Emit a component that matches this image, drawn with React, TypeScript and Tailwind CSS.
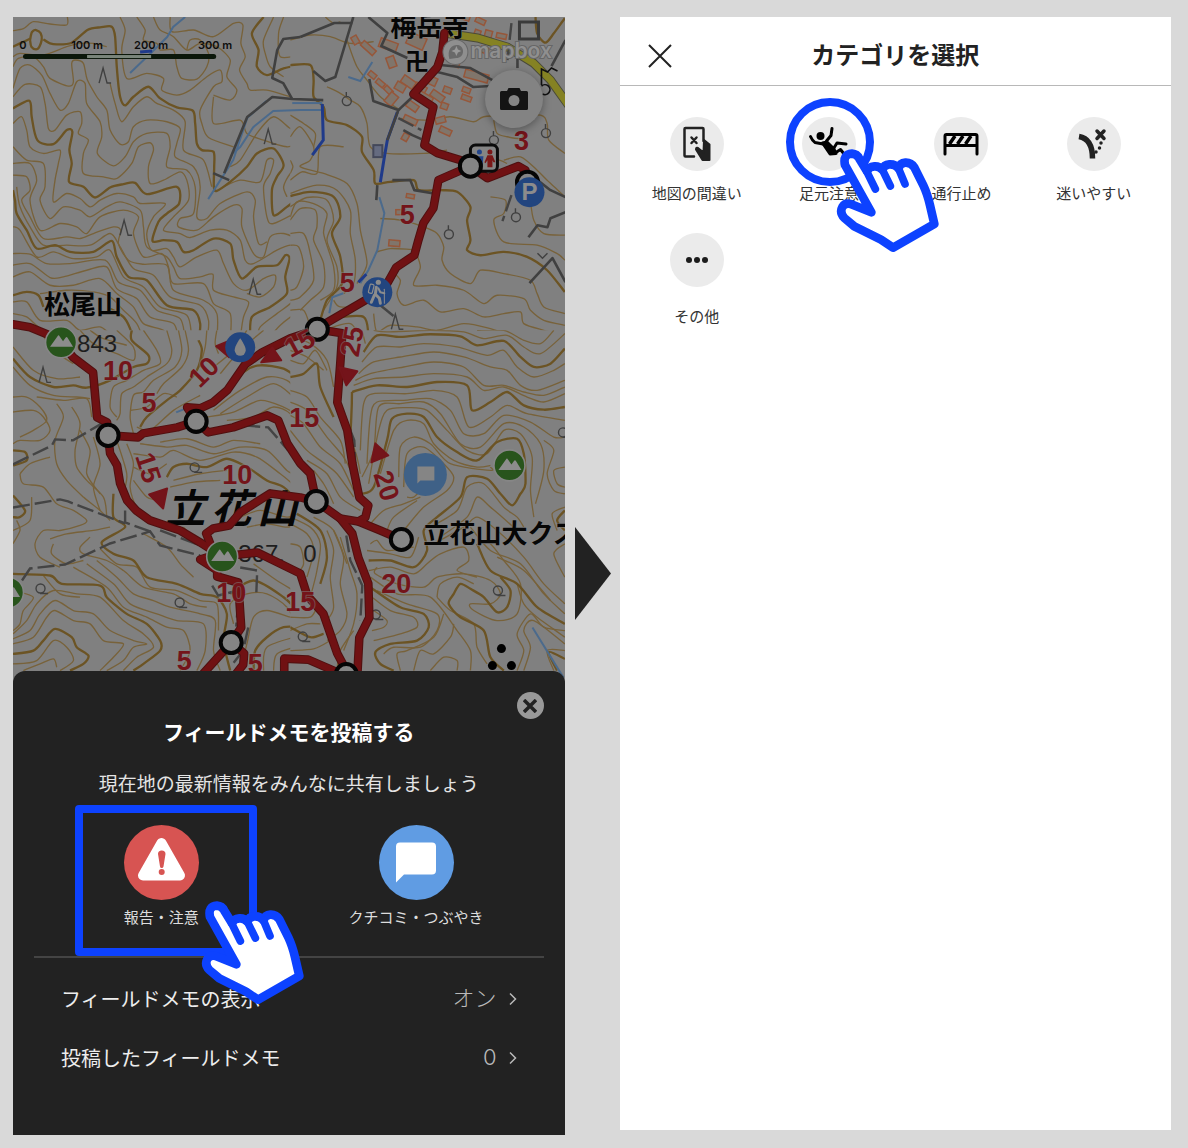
import type { ReactNode } from 'react';

/* ---------- terrain map data ---------- */

type Tile = { id: string; x: number; y: number; w: number; h: number; thick: string[]; thin: string[] };

/* Contour lines. Each tile stores its points at three units per map pixel. */
const tiles: Tile[] = [
  {
    id: 'nw', x: 0, y: 0, w: 290, h: 330,
    thick: [
      '130,118 150,130 170,133 215,128 262,90 300,82 335,80 345,110 350,200 360,290 375,316 400,290 445,260 480,295 530,322 578,332 585,370 590,430 605,450 640,455 642,500 641,560 650,572 690,545 740,500 770,460 820,445 850,495 830,530 815,570 820,645 860,620 900,588',
      '39,325 88,302 95,350 112,420 160,432 200,390 217,395 208,450 215,490 207,545 250,560 285,592 330,562 370,552 405,548 440,582 530,560 537,610 500,640 475,665 457,722 490,720 530,725 550,755 580,750 640,715 690,730 700,780 725,835 770,800 830,795 855,765 868,775 855,830 860,880 810,920 755,950 750,1020',
      '39,570 45,600 50,640 80,690 110,745 165,735 210,755 280,755 335,722 350,770 385,830 440,840 500,915 580,930 600,970 595,1020',
      '39,885 80,875 115,885 130,920',
      '330,925 370,950 390,985 395,1020',
      '790,51 755,100 775,150 770,200 800,225 850,205 900,195',
      '90,120 96,96 108,90 122,100 125,120 118,140 108,148 94,140 90,120',
      '39,140 60,130 90,116',
    ],
    thin: [
      '39,92 70,86 100,65 150,72 200,75 202,51',
      '39,170 60,160 130,165 200,140 240,130 280,130 320,140',
      '39,200 55,175 100,170 130,200 150,235 205,258 220,245 215,190 225,180 250,190 262,240 290,290 320,330 330,390 360,432 385,425 400,380 440,360 500,365 540,385 530,430 525,470 580,500 600,560 590,650 620,655 660,610 740,575 765,600 760,650 775,730 800,725',
      '39,265 60,205 90,195 125,225 150,280 180,330 205,310 230,245 255,250 260,310 300,365 305,410 292,460 340,497 375,470 400,425 440,400 500,400 510,440 500,500 560,510 585,560 580,640 540,655 535,680 590,690 640,650 700,615 725,625 725,680 760,760 790,770 810,710 850,700 900,720',
      '39,290 75,253 120,260 135,310 145,385 165,390 200,345 240,335 245,370 235,400 265,420 250,460 250,520 310,530 350,535 395,490 415,440 450,428 460,450 445,500 450,550 490,540 540,515 560,540 565,600 520,650 490,690 540,700 570,712 630,690 680,690 720,720 735,780 760,790 830,750 870,735 900,745',
      '330,250 345,310 365,365 400,320 440,290 470,310 520,330 555,365 550,450 610,480 635,560',
      '39,370 65,350 80,390 90,440 130,460 180,450 175,490 165,540 160,605 200,580 240,595 270,620 300,600 350,580 400,590 420,610 495,610 460,650 440,700 455,750 500,745 520,770 540,800 590,770 650,750 670,790 700,850 740,870 790,835 825,825 820,860 780,890 740,880',
      '39,440 80,480 130,490 135,560 120,600 150,655 190,620 240,630 270,650 320,620 360,605 420,630 430,680 440,740 500,770 520,800 540,835 600,830 638,822 640,870 700,890 745,905 730,950 720,1020',
      '39,490 90,490 110,540 90,600 120,690 180,670 230,680 260,700 300,650 370,630 415,650 400,700 430,770 485,760 505,800 520,850 610,850 640,910 690,940 690,1020',
      '39,525 80,530 90,570 65,600 90,650 130,715 200,710 240,715 280,700 340,680 362,690 355,730 385,780 430,792 500,795 520,870 610,900 650,940 650,1020',
      '50,560 60,620 90,680 130,735 200,735 270,735 330,700 360,740 400,805 460,825 510,890 600,915 625,960 620,1020',
      '39,680 60,690 110,770 160,755 220,775 290,770 330,750 370,830 430,860 480,920 560,945 575,1020',
      '39,760 90,762 140,790 210,790 315,780 355,845 420,870 470,930 540,955 555,1020',
      '39,795 90,790 150,832 190,830 260,810 320,800 350,865 410,895 450,950 520,970 535,1020',
      '39,830 90,815 150,855 220,855 300,835 350,880 400,920 430,970 490,990 500,1020',
      '120,880 200,870 280,875 330,890 370,930 410,970 430,1020',
      '39,905 80,905 120,960 200,960 240,990 300,980 350,1020',
      '39,940 80,950 130,990 200,1000 230,1020',
      '360,51 375,90 365,150 380,235 440,220 490,235 485,270 530,285 570,270 620,230 660,210 665,245 640,260 600,330 605,370 625,412 700,440',
      '410,51 435,90 430,120 470,130 480,150 520,150 530,200 545,235 590,237 620,200 625,160 600,120 570,120 560,150',
      '510,51 515,95 580,90 640,110 700,70 728,75 722,130 735,170 718,210 740,250 750,270 800,270 870,290 900,300',
      '640,290 640,370 720,360 740,400 790,420 860,440 900,425',
      '460,51 480,90 520,110 560,150 600,130 650,140 690,180 680,230 710,270 690,300 640,285',
      '690,500 720,480 770,400 820,350 870,385 900,390',
      '670,560 720,540 780,545 800,480 820,480 810,520 790,560 800,650 820,670 900,630',
      '850,51 835,100 840,170 900,165',
      '820,51 790,120 795,160 810,200 850,230',
      '890,455 900,500', '860,590 850,560 870,520 900,500',
      '770,1020 780,980 830,940 880,900 900,840', '800,1020 840,975 900,930', '900,760 880,830 885,900',
    ],
  },
  {
    id: 'ne', x: 290, y: 0, w: 275, h: 330,
    thick: [
      '0,195 60,195 70,240 70,290 100,320 110,360 170,375 215,410 215,455 250,510 255,550 300,545 370,540 385,570 450,570 500,575 540,620 530,660 540,720 530,750 570,765 640,755 710,770 770,810 823,875',
      '0,588 60,575 130,590 150,650 125,700 150,770 155,850 110,900 90,960',
      '735,51 740,100 765,128 790,100 823,55',
      '120,955 220,950 235,1020',
      '350,1020 400,1000 490,1010 550,1020',
    ],
    thin: [
      '0,120 60,105 120,110 180,130 250,125', '105,51 130,70 150,65',
      '170,120 200,200 230,240 270,290 330,330',
      '110,260 150,280 180,300 210,320 230,370 240,440 290,460 400,460 470,450',
      '330,355 420,360 480,350 550,365 580,350 660,345 750,345 770,370 775,420 823,460',
      '0,410 30,380 70,440 60,480 30,500 100,520 170,550 200,610 210,690 230,790 200,850',
      '0,345 40,370 75,400 70,440', '0,480 8,500 0,520', '0,540 35,515 80,520 90,440 160,440',
      '0,580 80,555 140,570 180,630 180,700 195,780 190,850 160,880',
      '0,650 20,605 70,610 110,640 100,700 130,800 130,870 90,900',
      '0,660 30,625 75,630 80,680 70,720 100,790 100,860 60,900 30,930',
      '0,700 40,700 60,760 70,840 30,890 0,900', '0,735 25,740 40,800 20,860 0,870',
      '0,930 40,930 60,980', '0,620 50,592 110,600 130,660 110,720 140,800 140,860 100,930',
      '270,655 330,660 400,680 440,700 460,740 455,780 480,820 540,850 570,810 640,820 720,840 740,880 760,920 823,940',
      '370,740 390,800 370,855 440,855 520,870 580,910 620,885 700,895 720,930 760,960 823,975',
      '300,810 330,840 320,880 340,915 400,900 450,935 520,925 580,950 640,940 690,935 700,970 760,990 823,1005',
      '250,940 260,995 300,975 380,980 440,990 520,970 600,985 680,1010 740,1005',
      '610,360 620,400 650,410 690,415 700,400', '600,590 645,600 640,640 610,660 640,725 740,735 800,760 823,780',
      '600,515 620,480 650,490', '720,600 730,660 760,700 823,705', '640,480 690,470 740,510 770,540 823,590',
      '260,755 300,745 370,748', '130,900 150,920 220,915', '100,990 180,970 210,1020',
    ],
  },
  {
    id: 'sw', x: 0, y: 330, w: 290, h: 345,
    thick: [
      '39,85 90,140 160,170 220,165 260,172 330,150 400,110 440,100 445,75 395,30 395,0',
      '39,730 150,735 185,760 300,765 320,800 380,850 440,880 480,930 480,960 430,1000 400,1020',
      '39,970 100,960 130,930 165,895 215,920 230,950 265,975 250,1000 210,1020',
      '900,150 850,115 780,105 730,125 680,190 640,215', '420,290 440,260 500,210 540,180 590,120 605,60 595,30',
      '340,490 340,560 375,590 305,635 340,670 400,690 440,740 530,760 600,790 650,800 680,850 670,930 690,1020',
      '500,440 520,410 560,400 620,410 680,385 740,410 800,450 850,470 900,520',
      '39,495 75,540 60,560 39,560', '39,360 75,365 80,390 39,405',
      '760,1020 765,960 800,920 850,890 900,890', '690,790 760,750 850,800 900,850',
    ],
    thin: [
      '39,50 100,120 170,145 240,140', '39,110 90,165 160,195 230,200 270,205',
      '120,0 160,60 220,100', '240,0 280,40 350,70 400,90 400,50 350,0', '270,0 310,25 380,45', '430,0 470,60 480,100 430,120 380,150 340,170 330,230 350,260',
      '500,0 515,60 500,100 440,140 400,170 365,190 360,250 350,270', '535,0 545,60 525,110 460,150 430,185 400,195 390,260 400,310',
      '555,0 565,60 545,110 490,160 470,190', '620,0 615,50 600,110', '650,0 645,40 655,70', '390,240 440,230 490,190 530,200',
      '39,200 80,200 120,230 140,270 100,300 60,320', '39,245 100,240 130,260 150,300 120,330 60,330 39,340',
      '110,200 190,210 260,205 275,260', '170,220 190,260 165,330 170,400 200,450 250,500 300,540 330,570',
      '215,230 240,280 225,360 230,410 260,450 310,500 320,560',
      '280,320 300,400 280,470 300,540', '240,300 270,360 260,430 300,490',
      '60,430 90,400 150,380', '60,430 70,460 130,470 170,520 220,540 260,570 240,585 180,600 130,600 105,640 120,680 180,710',
      '150,625 200,610 280,600 330,590', '160,640 155,670 200,700 250,690', '270,620 240,650 250,670 320,690 370,720 430,770 520,790 570,820 620,830',
      '300,655 350,700 410,710 450,770 530,780 600,810 650,820 655,900', '290,690 350,740 400,790 460,810 510,830 600,850 645,870 640,960 660,1020',
      '260,700 340,760 390,820 470,850 530,870 610,880 615,960 590,1020', '220,710 320,770 370,830 440,860 500,890 550,900 570,960 540,1020',
      '39,780 100,800 70,840 60,880 39,900', '39,925 90,900 120,850 165,810 220,840 280,850 330,900 400,930 440,940 400,950 370,990 320,1020',
      '39,940 100,920 140,860 165,840 220,870 270,880 310,930 370,940 340,980 300,1020', '39,910 80,870 110,820 160,780 230,790 300,800 370,870 430,910 460,950 410,980 370,1020',
      '39,1000 110,990 160,930 200,950 220,990 180,1020', '70,1020 120,1000 160,985 170,1010', '130,735 180,790 240,800',
      '410,290 450,300 520,240 600,195', '480,335 560,325 640,350 700,330 780,340', '420,340 500,350 560,345 640,370 720,350 800,360 860,420 900,440',
      '400,370 480,380 520,360 600,390 700,365 770,380 840,430 900,480', '400,410 450,430 500,400', '400,450 440,500 480,510',
      '520,450 600,430 680,420', '510,470 580,455 660,450', '380,340 400,400 390,470 410,530 450,560',
      '350,330 380,430 370,490', '640,240 720,180 800,140 860,150 900,190', '660,250 740,200 820,160 880,200 900,220', '620,260 700,245 780,210 850,230 900,260',
      '680,270 760,260 820,230 870,250 900,300', '660,130 720,60 790,0', '640,110 700,60 740,0',
      '760,700 830,750 880,780 900,790', '700,880 690,820 740,790 800,790 860,830 900,900', '720,1020 740,940 760,860 800,840 870,860 900,870',
      '790,1020 800,950 900,915', '820,1020 830,970 900,945', '720,560 780,540 860,560 900,545', '740,590 800,580 860,590 900,580',
      '39,640 60,600 50,570', '39,600 90,570 95,500', '550,590 580,620', '430,610 500,650 540,700 580,740',
    ],
  },
  {
    id: 'se', x: 290, y: 330, w: 275, h: 345,
    thick: [
      '220,65 260,15 330,20 420,12 510,18 560,45 640,32 690,80 730,110 780,100 823,55',
      '185,185 260,165 350,170 440,155 530,165 545,240 600,215 650,185 700,225 760,238 823,230',
      '0,140 40,130 80,100 90,170 130,260', '185,185 183,260 180,330',
      '215,490 250,470 290,330 305,265 350,250 400,260 440,320 500,365 560,390 620,335 680,325 700,370 705,460 690,490 665,525 630,490 590,445 530,440 510,500 440,560 400,600 410,660 370,710 300,690 235,690',
      '560,640 600,720 680,760 740,830 823,880',
      '240,770 330,830 400,850 415,890 380,930 300,940 255,965 270,1000 310,1020',
      '640,1020 600,980 580,900 510,860 475,820 490,790 510,760 540,775 580,800 620,845 650,830 660,780 630,740',
      '800,1020 775,965 823,985', '823,540 800,570 823,600', '20,550 90,600 110,680 90,760', '0,890 60,920 100,910',
    ],
    thin: [
      '215,0 225,40', '250,0 290,5 420,0 520,5 580,25 650,15 700,50 750,70 823,10', '560,0 640,0 700,30 750,40 790,0',
      '215,95 260,50 330,50 400,40 500,50 590,75 640,60 680,110 730,140 790,120 823,100',
      '205,130 250,95 330,80 430,65 520,80 600,110 650,120 690,165 740,180 823,150',
      '195,150 240,130 340,110 430,95 520,110 580,165 640,165 700,185 760,195 823,170',
      '190,165 250,145 340,140 430,130 530,140 580,180 640,170 710,200 760,215 823,190',
      '210,360 220,220 250,190 350,190 430,180 500,200 535,290 600,260 650,225 710,250 823,270',
      '230,400 240,260 260,215 340,210 420,205 480,240 520,310 580,310 640,255 720,275 790,320 823,320',
      '215,440 250,360 265,230 330,220 400,215 450,250 510,340 570,350 640,280 700,290 750,340 760,420 735,520',
      '235,460 265,300 290,240 350,232 410,240 470,300 530,360 590,370 640,300 690,310 725,380 720,480 730,560',
      '270,430 310,300 350,270 400,280 430,340 490,390 560,410 600,405', '325,440 330,350 370,320 420,340 480,400 600,420 600,410',
      '340,470 350,370 400,350 460,400 490,440 470,480 400,530 340,600', '350,500 370,500 400,470', '380,510 310,560 290,600',
      '240,580 280,540 340,520 390,500', '420,590 500,540 530,470 580,460 640,530 680,560 700,590', '450,620 530,560 560,500 600,530 680,600',
      '430,640 520,590 560,560 620,600 700,680 760,760 823,820', '540,590 600,660 690,700 760,790 823,850', '620,680 700,720 780,810',
      '823,530 785,550 800,600', '823,410 790,420 800,460 823,470', '760,330 790,360 770,430 790,480 823,490',
      '235,720 300,710 370,730 410,700 450,670 520,650 535,690 500,720 560,740', '260,710 255,730 320,760 400,770 440,740 520,730 600,750 630,790 600,820 540,820 550,840 620,870 680,850 690,760 640,690 600,640 570,630',
      '240,640 260,630 290,660 370,650', '230,660 300,670 360,680 385,620', '240,740 320,790 420,800 500,900 540,960 540,1020',
      '245,800 300,840 370,860 380,890 330,910 250,930', '250,840 290,870 280,890 245,900', '260,780 350,820 440,850 440,900 390,950 310,950 280,970',
      '440,800 450,760 500,740 550,760', '440,800 480,840 550,880 560,950 590,1000', '460,850 430,920 350,960 320,970 330,1020', '490,880 480,920 430,970 390,960 370,1020', '420,1020 460,980 500,990 500,1020',
      '680,1020 700,960 680,910 720,850 760,890 823,900', '700,1020 720,950 700,900 730,870 823,940', '680,760 700,820 740,860 823,920', '790,1020 770,960 823,960',
      '0,20 60,40 110,90 130,170', '0,60 50,80 100,120', '0,90 40,100 75,60 110,120', '0,180 50,200 90,260 150,330 165,400', '0,215 50,240 110,320 160,380 190,440', '0,255 40,280 90,350 150,400 190,480',
      '0,300 50,360 90,390 140,430 190,500', '50,390 110,430 150,500 210,540', '70,420 100,460 130,520', '180,320 200,380 210,430',
      '0,560 60,590 90,640 80,720 60,800', '0,580 50,610 70,660 50,740', '110,600 130,660 120,740 130,830 110,870', '130,600 160,680 150,760 170,850 150,900 110,930', '150,620 180,720 200,790 190,880 160,960',
      '0,640 30,650 40,700 20,730', '70,560 130,600 170,700', '0,960 70,955 120,930', '0,900 50,880 90,880', '0,860 60,860 80,830', '823,640 790,670 823,740', '140,1020 150,960 190,900',
    ],
  },
];

/* Catmull-Rom smoothing of a "x,y x,y" list */
function smooth(points: string): string {
  const p = points.split(' ').map((s) => s.split(',').map(Number));
  const r = (n: number) => Math.round(n);
  let d = `M${p[0][0]} ${p[0][1]}`;
  for (let i = 0; i < p.length - 1; i++) {
    const a = p[Math.max(i - 1, 0)];
    const b = p[i];
    const c = p[i + 1];
    const e = p[Math.min(i + 2, p.length - 1)];
    const k = 7;
    d += `C${r(b[0] + (c[0] - a[0]) / k)} ${r(b[1] + (c[1] - a[1]) / k)} ${r(c[0] - (e[0] - b[0]) / k)} ${r(c[1] - (e[1] - b[1]) / k)} ${c[0]} ${c[1]}`;
  }
  return d;
}

const routes = [
  '444,33 442,52 437,67 413,94 433,107 424,145 437,153 470,163',
  '470,166 487,178 518,166 525,170 527,182',
  '470,166 438,180 433,208 423,223 418,240 414,255 396,267 387,283 377,293 317,328',
  '317,329 290,338 262,352 245,364 227,390 213,402 200,408 187,407 196,421',
  '317,329 342,333 340,363 337,402 347,430 352,463 359,497 368,505 365,517 358,521',
  '316,501 340,518 358,521 380,530 401,539',
  '340,518 352,533 358,557 368,583 369,617 359,637 357,675',
  '108,435 138,437 143,433 177,427 196,421 208,432 233,427 267,415 278,420 287,443 300,463 310,473 316,501',
  '13,324 30,327 47,334 61,342 73,357 93,372 97,417 107,422 108,435',
  '108,435 110,453 117,465 120,483 127,500 136,510 150,520 180,530 200,542 222,556',
  '212,548 206,533 213,528 229,525 240,512 270,493 300,497 316,501',
  '222,556 257,552 300,573 307,595 323,613 337,653 346,670',
  '222,552 200,559 217,570 217,576 238,582 241,627 231,642',
  '231,642 203,673', '231,642 244,653 243,664 236,673',
  '284,675 284,658 308,659 338,672',
];

const greyRoads = [
  '300,37 334,23 352,23', '353,17 335,77 325,81 313,71', '369,79 373,101 398,110 387,140', '368,17 387,33 381,46 407,58',
  '398,110 412,97', '392,180 410,180 414,190 432,193', '377,185 376,200', '537,180 550,190 565,197', '565,212 550,218 547,227 537,225 528,237',
  '565,282 552,258 529,283', '437,72 457,77 473,87 490,86', '440,65 470,68 492,80', '300,37 283,39 277,50 272,78 283,83 292,99',
  '323,100 292,99 272,97 247,117 224,173', '551,66 565,40', '517,68 517,45', '403,130 412,135 421,139', '213,173 229,180',
];
const greyDashes = [
  '13,464 52,445 55,439 73,440 102,423', '13,507 60,499 68,501 125,523', '22,580 30,568 65,564 110,543 150,531 160,545 200,555',
  '125,510 125,522 150,531', '160,530 200,545', '511,23 507,60', '511,195 502,221', '398,118 421,130', '243,425 268,427 288,450',
  '342,410 354,440 356,490', '346,535 350,560 362,585 360,620', '238,600 236,626', '248,627 243,650 232,664', '240,567 257,570 256,595',
  '380,305 396,318', '212,585 218,595 238,590',
];
const brooks = ['185,17 173,27 167,37 157,47 130,73', '266,101 247,118 233,160 208,199', '322,110 300,110 273,111 253,127 240,147 233,153', '372,62 360,81 348,77', '379,197 384,213 377,250 368,270 360,283', '343,293 332,297 329,313', '532,627 563,677', '176,412 186,408', '292,103 322,103'];
const deepBrooks = ['322,104 323,140 312,155', '397,112 387,140 384,157 380,182', '358,282 366,274', '140,52 152,51'];

const houses: [number, number, number, number, number][] = [
  [355, 40, 6, 8, -30], [368, 48, 16, 6, 42], [388, 45, 18, 9, 20], [416, 41, 18, 12, 24], [391, 62, 8, 11, -20], [408, 82, 14, 8, 35],
  [372, 75, 8, 5, 40], [380, 83, 9, 5, 40], [388, 90, 9, 5, 45], [391, 99, 9, 12, 40], [400, 87, 10, 8, 30], [412, 106, 12, 7, 35],
  [420, 88, 12, 7, 30], [430, 80, 13, 8, 25], [424, 97, 17, 7, 30], [437, 96, 14, 7, 35], [444, 106, 7, 6, 20], [440, 120, 10, 6, -15],
  [445, 131, 12, 6, 25], [405, 137, 6, 7, 30], [410, 120, 14, 6, 25], [447, 90, 8, 6, 20], [476, 76, 24, 8, 15], [466, 90, 8, 5, 20],
  [466, 98, 10, 5, 20], [477, 33, 6, 6, 20], [488, 34, 7, 7, 15], [501, 36, 10, 5, 12], [480, 21, 10, 5, 25], [465, 17, 9, 6, 20],
  [394, 243, 11, 6, 5], [410, 196, 8, 4, 10], [400, 212, 9, 5, 0], [484, 50, 8, 6, 20], [456, 64, 6, 6, 20], [400, 17, 10, 5, 10],
];

const knots: [number, number][] = [[470, 166], [317, 329], [196, 421], [108, 435], [316, 501], [401, 539], [231, 642], [346, 674]];

const minutes: [string, number, number, number][] = [
  ['3', 521, 140, 0], ['5', 407, 214, 0], ['5', 347, 282, 0], ['15', 299, 342, -28], ['25', 351, 341, -80], ['10', 118, 370, 0],
  ['5', 149, 402, 0], ['10', 203, 371, -45], ['15', 304, 417, 0], ['10', 237, 474, 0], ['15', 149, 467, 72], ['20', 387, 485, 72],
  ['20', 396, 582, 0], ['10', 231, 591, 0], ['15', 300, 600, 0], ['5', 184, 659, 0], ['5', 255, 662, 0],
];

const arrowHeads = ['216,346 233,339 229,357', '261,362 272,347 281,360', '339,367 357,371 346,385', '149,494 167,488 163,508', '375,443 388,455 371,462'];
const conifers: [number, number][] = [[104, 76], [269, 137], [125, 228], [254, 287], [44, 375], [396, 322]];
const broadleafs: [number, number][] = [[346, 101], [545, 133], [448, 234], [515, 217], [493, 140]];
const shrubs: [number, number][] = [[194, 467], [40, 588], [179, 602], [497, 590], [375, 614], [302, 636], [562, 432]];
const peaks: [number, number][] = [[61, 342], [222, 556], [509, 465], [8, 592]];

const cjk = "'Noto Sans CJK JP'";

function TerrainMap() {
  return (
    <svg viewBox="13 17 551 666" preserveAspectRatio="xMidYMin slice" className="block h-[666px] w-full bg-[#808080]" role="img" aria-label="地図">
      <rect x="0" y="0" width="600" height="700" fill="#808080" />
      {tiles.map((t) => (
        <svg key={t.id} x={t.x} y={t.y} width={t.w} height={t.h} viewBox={`0 0 ${t.w * 3} ${t.h * 3}`} fill="none" stroke="#78623a">
          {t.thin.map((l) => <path key={l} d={smooth(l)} strokeWidth="4" />)}
          {t.thick.map((l) => <path key={l} d={smooth(l)} strokeWidth="7" stroke="#6c5424" />)}
        </svg>
      ))}
      <g fill="none" stroke="#4b6a8c" strokeWidth="2">{brooks.map((l) => <polyline key={l} points={l} />)}</g>
      <g fill="none" stroke="#1f3a8a" strokeWidth="3">{deepBrooks.map((l) => <polyline key={l} points={l} />)}</g>
      <g fill="#80756b" stroke="#96573a" strokeWidth="1.5">
        {houses.map(([x, y, w, h, a]) => <rect key={`${x}-${y}`} x={x - w / 2} y={y - h / 2} width={w} height={h} transform={`rotate(${a} ${x} ${y})`} />)}
      </g>
      <path d="M444 33L477 38L507 47L533 63L550 80L570 108" fill="none" stroke="#4a4a3a" strokeWidth="9" />
      <path d="M444 33L477 38L507 47L533 63L550 80L570 108" fill="none" stroke="#858223" strokeWidth="7" />
      <g fill="none" stroke="#404040" strokeWidth="2.6" strokeLinejoin="round">{greyRoads.map((l) => <polyline key={l} points={l} />)}</g>
      <g fill="none" stroke="#444" strokeWidth="2.4" strokeDasharray="17 5">{greyDashes.map((l) => <polyline key={l} points={l} />)}</g>
      <rect x="373" y="145" width="9" height="12" fill="#656b80" stroke="#44485a" strokeWidth="2" />
      <g fill="none" stroke="#404040" strokeWidth="1.4">
        {conifers.map(([x, y]) => <path key={x} d={`M${x - 5} ${y + 7}L${x - 1} ${y - 8}L${x + 3} ${y + 7}H${x + 7}`} />)}
        {broadleafs.map(([x, y]) => <path key={x} d={`M${x - 4} ${y}a4.5 4.5 0 1 0 9 0a4.5 4.5 0 1 0 -9 0M${x} ${y - 4}V${y - 9}`} />)}
        {shrubs.map(([x, y]) => <path key={x} d={`M${x - 4} ${y}a4.5 4.5 0 1 0 9 0a4.5 4.5 0 1 0 -9 0M${x} ${y + 5}H${x + 8}`} />)}
        <path d="M537 253L542 258L547 253" />
      </g>
      <path d="M519 22H538V39H519Z" fill="none" stroke="#3a3a3a" strokeWidth="3" />
      <path d="M541 85V69L547 72L551 68L557 71M541 86a5 5 0 1 1 1 8" fill="none" stroke="#111" strokeWidth="1.6" />
      <circle cx="501" cy="648" r="4.5" /><circle cx="492" cy="665" r="4.5" /><circle cx="511" cy="665" r="4.5" />

      <g fill="#060606" fontFamily={cjk} fontWeight="700" stroke="#858585" strokeWidth="1" paintOrder="stroke">
        <text x="44" y="314" fontSize="26">松尾山</text>
        <text x="390" y="36" fontSize="26">梅岳寺</text>
        <text x="405" y="70" fontSize="24">卍</text>
        <text x="423" y="543" fontSize="26">立花山大クス</text>
        <g transform="translate(165 523) skewX(-14)" fontSize="40" strokeWidth="0">
          <text x="0" y="0">立</text><text x="46" y="0">花</text><text x="92" y="0">山</text>
        </g>
      </g>
      <g fill="#1e1e1e" fontFamily="'Liberation Sans'" fontSize="24" fontWeight="400">
        <text x="77" y="352">843</text><text x="238" y="562">367.</text><text x="303" y="562">0</text>
      </g>

      <g fill="none" strokeLinejoin="round" strokeLinecap="round">
        <g stroke="#4f1010" strokeWidth="8.6">{routes.map((l) => <polyline key={l} points={l} />)}</g>
        <g stroke="#701113" strokeWidth="6.6">{routes.map((l) => <polyline key={l} points={l} />)}</g>
      </g>
      <g fill="#74141a" stroke="#74141a" strokeWidth="2" strokeLinejoin="round">{arrowHeads.map((a) => <polygon key={a} points={a} />)}</g>

      <g>
        <circle cx="240" cy="347" r="15" fill="#22457f" />
        <path d="M240 338C236 344 234.500 347 234.500 350A5.500 5.500 0 0 0 245.500 350C245.500 347 244 344 240 338Z" fill="#858585" />
        <circle cx="377" cy="292" r="15" fill="#22457f" />
        <g stroke="#8c8c8c" fill="none" strokeLinecap="round" strokeLinejoin="round">
          <circle cx="378" cy="282" r="2.600" fill="#8c8c8c" stroke="none" />
          <path d="M376 287L375 294L379 298L380 303M374 295L371 302" strokeWidth="3" />
          <path d="M378 288L380 292L384 293" strokeWidth="2" /><path d="M384 289V303" strokeWidth="1" />
          <rect x="369" y="284" width="4" height="9" rx="1" strokeWidth="1.200" transform="rotate(14 371 288)" />
        </g>
        <circle cx="425" cy="474" r="21.500" fill="#3f6187" />
        <path d="M417 466H434V480H420L417 483Z" fill="#858585" />
        {peaks.map(([x, y]) => (
          <g key={x} transform={`translate(${x} ${y})`}>
            <circle r="15.500" fill="#28541c" stroke="#868686" strokeWidth="1.600" />
            <path d="M-11 4.500L-3.500 -6Q-2.500 -8 -1.500 -6L2 -1L4.500 -4.500Q5.500 -6 6.500 -4.500L12 4.500Z" fill="#8c8c8c" />
          </g>
        ))}
      </g>

      <rect x="470" y="145" width="27" height="26" rx="5" fill="#858585" stroke="#0b0b0b" strokeWidth="3" />
      <g fill="#23458c"><circle cx="479" cy="152" r="2.500" /><path d="M475 156H483L482 167H476Z" /></g>
      <g fill="#7a1717"><circle cx="489.500" cy="152" r="2.500" /><path d="M487 155H492L495 162H493L492 160V167H487V160L485 163L484 162Z" /></g>
      <circle cx="527" cy="182" r="10.500" fill="#858585" stroke="#050505" strokeWidth="4" />
      <circle cx="529" cy="192" r="15" fill="#22457f" />
      <text x="529" y="200" textAnchor="middle" fontFamily="'Liberation Sans'" fontWeight="700" fontSize="24" fill="#8c8c8c">P</text>
      {knots.map(([x, y]) => <circle key={x} cx={x} cy={y} r="10.500" fill="#858585" stroke="#050505" strokeWidth="4" />)}

      <g fontFamily="'Liberation Sans'" fontWeight="700" fontSize="27" fill="#74141a" stroke="#858585" strokeOpacity="0.5" strokeWidth="2" paintOrder="stroke" textAnchor="middle">
        {minutes.map(([t, x, y, a]) => <text key={`${x}-${y}`} transform={`translate(${x} ${y}) rotate(${a})`} y="10">{t}</text>)}
      </g>

      <g fill="#8f8f8f" stroke="#666" strokeWidth="1.500">
        <circle cx="455" cy="52" r="12.500" strokeWidth="1" />
        <path d="M449 59C446 48 453 44 458 45C465 47 464 58 456 58Z" fill="#696969" stroke="none" />
        <path d="M456 46L457.500 49.500L461 51L457.500 52.500L456 56L454.500 52.500L451 51L454.500 49.500Z" stroke="none" fill="#999" />
        <text x="470" y="58" fontFamily="Inter" fontSize="21" fontWeight="600" strokeWidth="2" paintOrder="stroke">mapbox</text>
      </g>

      <g fontFamily="Inter" fontSize="11" fontWeight="600" fill="#0d0d0d" textAnchor="middle">
        <text x="23" y="49">0</text><text x="87" y="49">100 m</text><text x="151" y="49">200 m</text><text x="215" y="49">300 m</text>
      </g>
      <rect x="23" y="54" width="193" height="5" rx="2.500" fill="#0b170a" />
      <rect x="87" y="55" width="64" height="3" fill="#7a857a" />
    </svg>
  );
}

/* ---------- shared pieces ---------- */

function PointingHand({ className }: { className: string }) {
  return (
    <svg viewBox="170 176 312 312" className={`pointer-events-none absolute z-10 size-[104px] ${className}`} aria-hidden="true">
      <g stroke="#0d42ff" strokeWidth="26" strokeLinejoin="round" strokeLinecap="round" fill="#fff">
        <path d="M197 224Q190 192 218 190Q233 191 240 205L263 243Q268 229 285 228Q300 227 309 238Q314 223 330 222Q348 221 357 234Q362 218 378 217Q395 216 405 231L432 285Q444 310 452 345L465 401L341 472L305 448L225 408L195 383Q180 366 189 350Q197 337 214 341L276 366Z" />
        <path d="M262 243L288 296M309 238L333 287M357 233L377 281" strokeWidth="23" />
      </g>
    </svg>
  );
}

function Chevron() {
  return (
    <svg viewBox="0 0 8 14" className="h-[14px] w-2" fill="none" stroke="#b9b9b9" strokeWidth="1.500" aria-hidden="true">
      <path d="M1 1.500L6.500 7L1 12.500" />
    </svg>
  );
}

function SettingRow({ label, value }: { label: string; value: string }) {
  return (
    <button type="button" className="flex h-[59px] w-full items-center px-12 text-left">
      <span className="flex-1 text-[20px] text-[#ededed]">{label}</span>
      <span className="mr-3 font-[Inter,'Noto_Sans_CJK_JP',sans-serif] text-[22px] font-light text-[#b9b9b9]">{value}</span>
      <Chevron />
    </button>
  );
}

/* ---------- category icons, 54 x 54 ---------- */

const mapMistake = (
  <g fill="none" stroke="#222" strokeWidth="2.500" strokeLinejoin="round" strokeLinecap="round">
    <path d="M24 39.500H15.500Q14.500 39.500 14.500 38.500V12Q14.500 11 15.500 11H32.500Q33.500 11 33.500 12V24" />
    <path d="M21.500 20.500L26.500 26M26.500 20.500L21.500 26" strokeWidth="2.500" />
    <path d="M34 23L39.500 27.500V43H32.500L26 32.500Q26 30 28 31L33.500 35.500Z" fill="#222" strokeWidth="2" />
  </g>
);
const falling = (
  <g fill="none" stroke="#000" strokeLinecap="round" strokeLinejoin="round">
    <circle cx="18.500" cy="19" r="4" fill="#000" stroke="none" />
    <path d="M8.500 19.500Q10.500 24 13 25.500L21 27M30 11.500L29 18.500L24.500 24" strokeWidth="3" />
    <path d="M20.500 26L25 25L32 32L34 36.500L28 37Z" fill="#000" strokeWidth="3" />
    <path d="M30 34L35 26L44 27M33 36L38.500 32.500L46 42" strokeWidth="3" />
  </g>
);
const barrier = (
  <g fill="none" stroke="#000" strokeWidth="3" strokeLinecap="round" strokeLinejoin="round">
    <path d="M11 37V19Q11 17.500 12.500 17.500H41.500Q43 17.500 43 19V37M11 28.500H43" />
    <path d="M15.500 27L21 19M23.500 27L29 19M31.500 27L37 19" strokeWidth="3.500" strokeLinecap="butt" />
  </g>
);
const easyToLose = (
  <g fill="none" stroke="#222">
    <path d="M12 19.500C21 21 25.500 29 25.500 41.500" strokeWidth="5.500" />
    <path d="M30 14L37 21.500M37 14L30 21.500" strokeWidth="3.500" strokeLinecap="round" />
    <path d="M34 26v.01M32.500 31v.01M29 35v.01" strokeWidth="3.500" strokeLinecap="round" />
  </g>
);
const others = (
  <g fill="#1c1c1c"><circle cx="19" cy="27" r="3" /><circle cx="27" cy="27" r="3" /><circle cx="35" cy="27" r="3" /></g>
);

type Category = { label: string; icon: ReactNode; selected?: boolean; loose?: boolean };
const categories: Category[] = [
  { label: '地図の間違い', icon: mapMistake },
  { label: '足元注意', icon: falling, selected: true },
  { label: '通行止め', icon: barrier },
  { label: '迷いやすい', icon: easyToLose },
  { label: 'その他', icon: others, loose: true },
];

function CategoryButton({ label, icon, selected, loose }: Category) {
  return (
    <button type="button" className={`relative flex flex-col items-center ${loose ? 'gap-[18px]' : 'gap-[11px]'}`}>
      <svg viewBox="0 0 54 54" className="size-[54px] rounded-full bg-[#ebebeb]" aria-hidden="true">{icon}</svg>
      <span className="text-[15px] leading-[22px] text-[#333]">{label}</span>
      {selected && (
        <>
          <span className="absolute -top-[19px] left-[23px] size-[88px] rounded-full border-8 border-[#0d42ff]" />
          <PointingHand className="left-[73px] top-8" />
        </>
      )}
    </button>
  );
}

/* ---------- page ---------- */

export default function App() {
  return (
    <main className="grid min-h-screen grid-cols-[1fr_55px_1fr] bg-[#d9d9d9] pb-[13px] pl-[13px] pr-[17px] pt-[17px] font-['Noto_Sans_CJK_JP',sans-serif]">
      <section className="flex min-w-0 flex-col">
        <TerrainMapWithCamera />
        <div className="relative -mt-3 flex-1 rounded-t-xl bg-[#222] text-white">
          <div className="flex justify-end pr-[21px] pt-[21px]">
            <button type="button" aria-label="閉じる" className="flex size-[27px] items-center justify-center rounded-full bg-[#999]">
              <svg viewBox="0 0 14 14" className="size-[14px]" stroke="#222" strokeWidth="3.500"><path d="M1 1L13 13M13 1L1 13" /></svg>
            </button>
          </div>
          <h2 className="text-center text-[21px] font-bold leading-6">フィールドメモを投稿する</h2>
          <p className="mt-[26px] text-center text-[19px] leading-7 text-[#e4e4e4]">現在地の最新情報をみんなに共有しましょう</p>
          <div className="mx-[21px] mt-7 grid grid-cols-2 border-b-2 border-[#444] pb-7">
            <button type="button" className="relative flex flex-col items-center gap-[6px]">
              <svg viewBox="0 0 75 75" className="size-[75px] rounded-full bg-[#d75452]" aria-hidden="true">
                <path d="M37.500 18L56 50.500H19Z" fill="#fff" stroke="#fff" strokeWidth="10" strokeLinejoin="round" />
                <path d="M34 29Q34 25.500 37.700 25.500Q41.500 25.500 41.500 29L39.500 41.500Q39.200 43 37.700 43Q36.200 43 36 41.500Z" fill="#d75452" />
                <circle cx="37.700" cy="47" r="3" fill="#d75452" />
              </svg>
              <span className="text-[15px] leading-[22px] text-[#ddd]">報告・注意</span>
              <span className="absolute -top-[20px] left-[41px] h-[151px] w-[182px] rounded-[4px] border-8 border-[#0d42ff]" />
              <PointingHand className="left-[167px] top-[76px]" />
            </button>
            <button type="button" className="flex flex-col items-center gap-[6px]">
              <svg viewBox="0 0 75 75" className="size-[75px] rounded-full bg-[#609ce3]" aria-hidden="true">
                <path d="M21 17.500H53Q57 17.500 57 21.500V45.500Q57 49.500 53 49.500H25L17 57.500V21.500Q17 17.500 21 17.500Z" fill="#fff" />
              </svg>
              <span className="text-[15px] leading-[22px] text-[#ddd]">クチコミ・つぶやき</span>
            </button>
          </div>
          <div className="pt-[11px]">
            <SettingRow label="フィールドメモの表示" value="オン" />
            <SettingRow label="投稿したフィールドメモ" value="0" />
          </div>
        </div>
      </section>

      <div className="flex items-center justify-center pb-[6px] pl-[2px]">
        <svg viewBox="0 0 36 93" className="h-[93px] w-9" aria-hidden="true"><path d="M0 0L36 46.500L0 93Z" fill="#222" /></svg>
      </div>

      <section className="mb-[5px] min-w-0 bg-white">
        <header className="relative flex h-[69px] items-center justify-center border-b border-[#b8b8b8] pt-[6px]">
          <button type="button" aria-label="閉じる" className="absolute left-7 top-[27px]">
            <svg viewBox="0 0 24 24" className="size-6" stroke="#222" strokeWidth="2"><path d="M1 1L23 23M23 1L1 23" /></svg>
          </button>
          <h1 className="text-[24px] font-bold leading-8 text-[#222]">カテゴリを選択</h1>
        </header>
        <div className="grid grid-cols-4 gap-y-[29px] px-[11px] pt-[31px]">
          {categories.map((c) => <CategoryButton key={c.label} {...c} />)}
        </div>
      </section>
    </main>
  );
}

function TerrainMapWithCamera() {
  return (
    <div className="relative overflow-hidden">
      <TerrainMap />
      <button type="button" aria-label="カメラ" className="absolute right-[22px] top-[53px] flex size-[58px] items-center justify-center rounded-full bg-[#838383] shadow-[0_2px_8px_rgba(0,0,0,0.35)]">
        <svg viewBox="0 0 30 24" className="h-6 w-[30px]" aria-hidden="true">
          <path d="M2.500 4H8L9.500 1H20.500L22 4H27.500Q29 4 29 5.500V21.500Q29 23 27.500 23H2.500Q1 23 1 21.500V5.500Q1 4 2.500 4Z" fill="#141414" />
          <circle cx="15" cy="13.500" r="5.500" fill="#858585" />
        </svg>
      </button>
    </div>
  );
}
